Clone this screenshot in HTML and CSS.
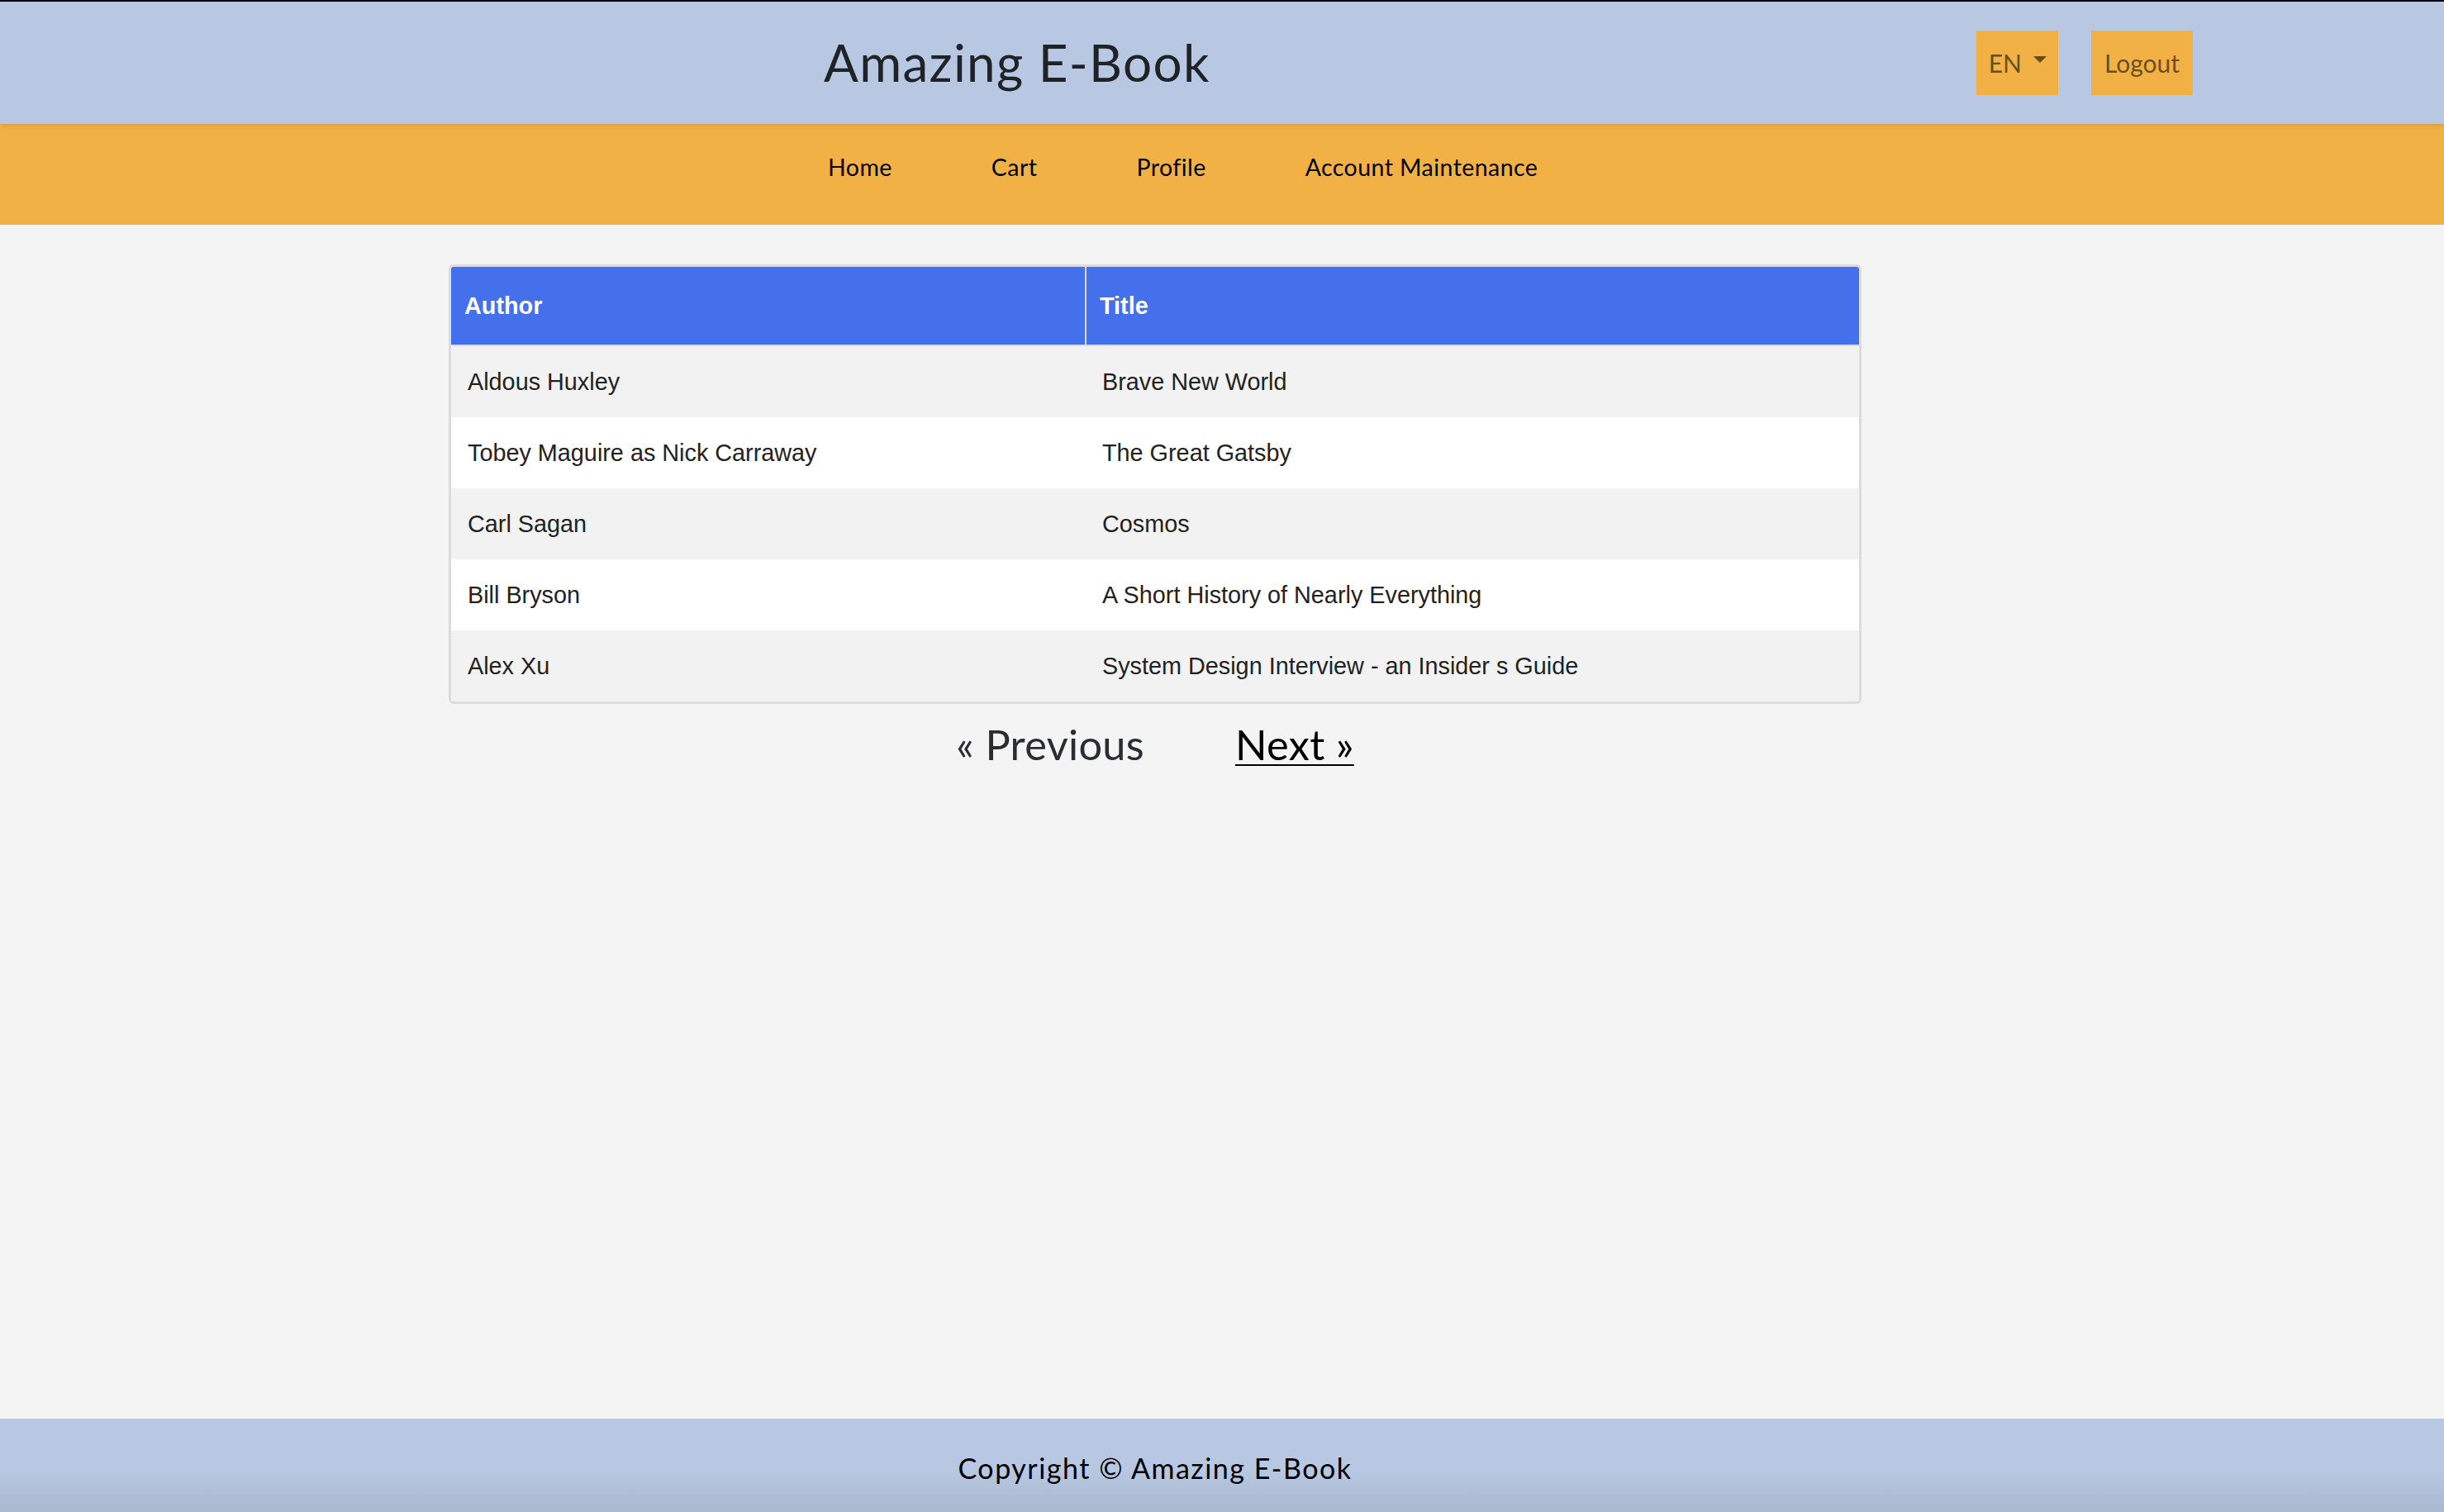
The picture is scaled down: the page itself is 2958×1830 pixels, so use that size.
FILE: index.html
```html
<!DOCTYPE html>
<html lang="en">
<head>
<meta charset="utf-8">
<title>Amazing E-Book</title>
<link rel="stylesheet" href="styles.css">
</head>
<body>
<header class="topbar">
  <h1 class="brand">Amazing E-Book</h1>
  <div class="actions">
    <button class="btn lang">EN <span class="caret"></span></button>
    <button class="btn">Logout</button>
  </div>
</header>
<nav class="menu">
  <a href="#" class="menu-link">Home</a>
  <a href="#" class="menu-link">Cart</a>
  <a href="#" class="menu-link">Profile</a>
  <a href="#" class="menu-link">Account Maintenance</a>
</nav>
<main class="content">
  <div class="table-wrap">
    <table class="books">
      <thead>
        <tr><th class="col-author">Author</th><th>Title</th></tr>
      </thead>
      <tbody>
        <tr><td>Aldous Huxley</td><td>Brave New World</td></tr>
        <tr><td>Tobey Maguire as Nick Carraway</td><td>The Great Gatsby</td></tr>
        <tr><td>Carl Sagan</td><td>Cosmos</td></tr>
        <tr><td>Bill Bryson</td><td>A Short History of Nearly Everything</td></tr>
        <tr><td>Alex Xu</td><td>System Design Interview - an Insider s Guide</td></tr>
      </tbody>
    </table>
  </div>
  <div class="pager">
    <span class="prev">&laquo; Previous</span>
    <a href="#" class="next">Next &raquo;</a>
  </div>
</main>
<footer class="foot">Copyright &copy; Amazing E-Book</footer>
</body>
</html>
```
FILE: styles.css
```css
html, body {
  margin: 0;
  padding: 0;
}
body {
  min-height: 100vh;
  display: flex;
  flex-direction: column;
  background: #f4f4f4;
  font-family: "Lato", "Noto Sans", sans-serif;
  color: #212529;
}
.topbar {
  box-sizing: border-box;
  height: 150px;
  border-top: 2px solid #000;
  background: #b8c8e2;
  display: flex;
  align-items: center;
  padding: 0 304px 0 997px;
  position: relative;
  z-index: 2;
  box-shadow: 0 2px 6px rgba(0, 0, 0, 0.12);
}
.brand {
  margin: 0;
  margin-top: -2px;
  font-size: 62px;
  font-weight: 400;
  letter-spacing: 1.3px;
  line-height: 1.2;
  color: #1f2226;
}
.actions {
  margin-left: auto;
  display: flex;
  gap: 40px;
}
.btn {
  height: 78px;
  border: none;
  border-radius: 0;
  background: #f2b144;
  color: #6b4f1f;
  font-family: "Lato", "Noto Sans", sans-serif;
  font-size: 30px;
  padding: 0 16px;
  display: flex;
  align-items: center;
}
.lang {
  padding: 0 14px 0 15px;
  gap: 14px;
}
.caret {
  width: 0;
  height: 0;
  border-left: 8px solid transparent;
  border-right: 8px solid transparent;
  border-top: 8px solid #6b4b14;
  margin-top: -8px;
}
.menu {
  box-sizing: border-box;
  height: 122px;
  background: #f2b144;
  display: flex;
  align-items: flex-start;
  padding: 32px 0 0 942px;
  gap: 0;
}
.menu-link {
  font-size: 28.5px;
  letter-spacing: 0.45px;
  line-height: 40px;
  color: #000;
  text-decoration: none;
  padding: 0 60px;
}
.content {
  flex: 1;
  display: flex;
  flex-direction: column;
  align-items: center;
  padding: 48px 162px 0 0;
}
.table-wrap {
  width: 1704px;
  border: 3px solid #dcdcdc;
  border-radius: 6px;
  overflow: hidden;
}
.books {
  width: 100%;
  border-collapse: collapse;
  font-family: "Liberation Sans", Arial, sans-serif;
  font-size: 28.8px;
}
.books th {
  background: #4570ec;
  color: #fff;
  text-align: left;
  font-weight: 700;
  height: 94px;
  padding: 0 16px;
  border-bottom: 2px solid #dcdcdc;
}
.books th.col-author {
  width: 735px;
  border-right: 2px solid #dcdcdc;
}
.books td {
  height: 86px;
  padding: 0 20px;
  color: #222;
}
.books tbody tr:nth-child(odd) td {
  background: #f2f2f2;
}
.books tbody tr:nth-child(even) td {
  background: #fff;
}
.pager {
  margin-top: 19px;
  display: flex;
  gap: 110px;
  font-size: 50.5px;
  letter-spacing: 0.3px;
  line-height: 60px;
}
.prev {
  color: #2a2d31;
}
.next {
  color: #000;
  text-decoration: underline;
  text-decoration-thickness: 2px;
  text-underline-offset: 5px;
}
.foot {
  box-sizing: border-box;
  height: 113px;
  display: flex;
  align-items: center;
  justify-content: center;
  padding: 6px 162px 0 0;
  font-size: 34px;
  letter-spacing: 1.5px;
  color: #000;
  background: linear-gradient(to bottom, #b8c8e2 0%, #b8c8e2 55%, #a9b7cf 100%);
}
```
